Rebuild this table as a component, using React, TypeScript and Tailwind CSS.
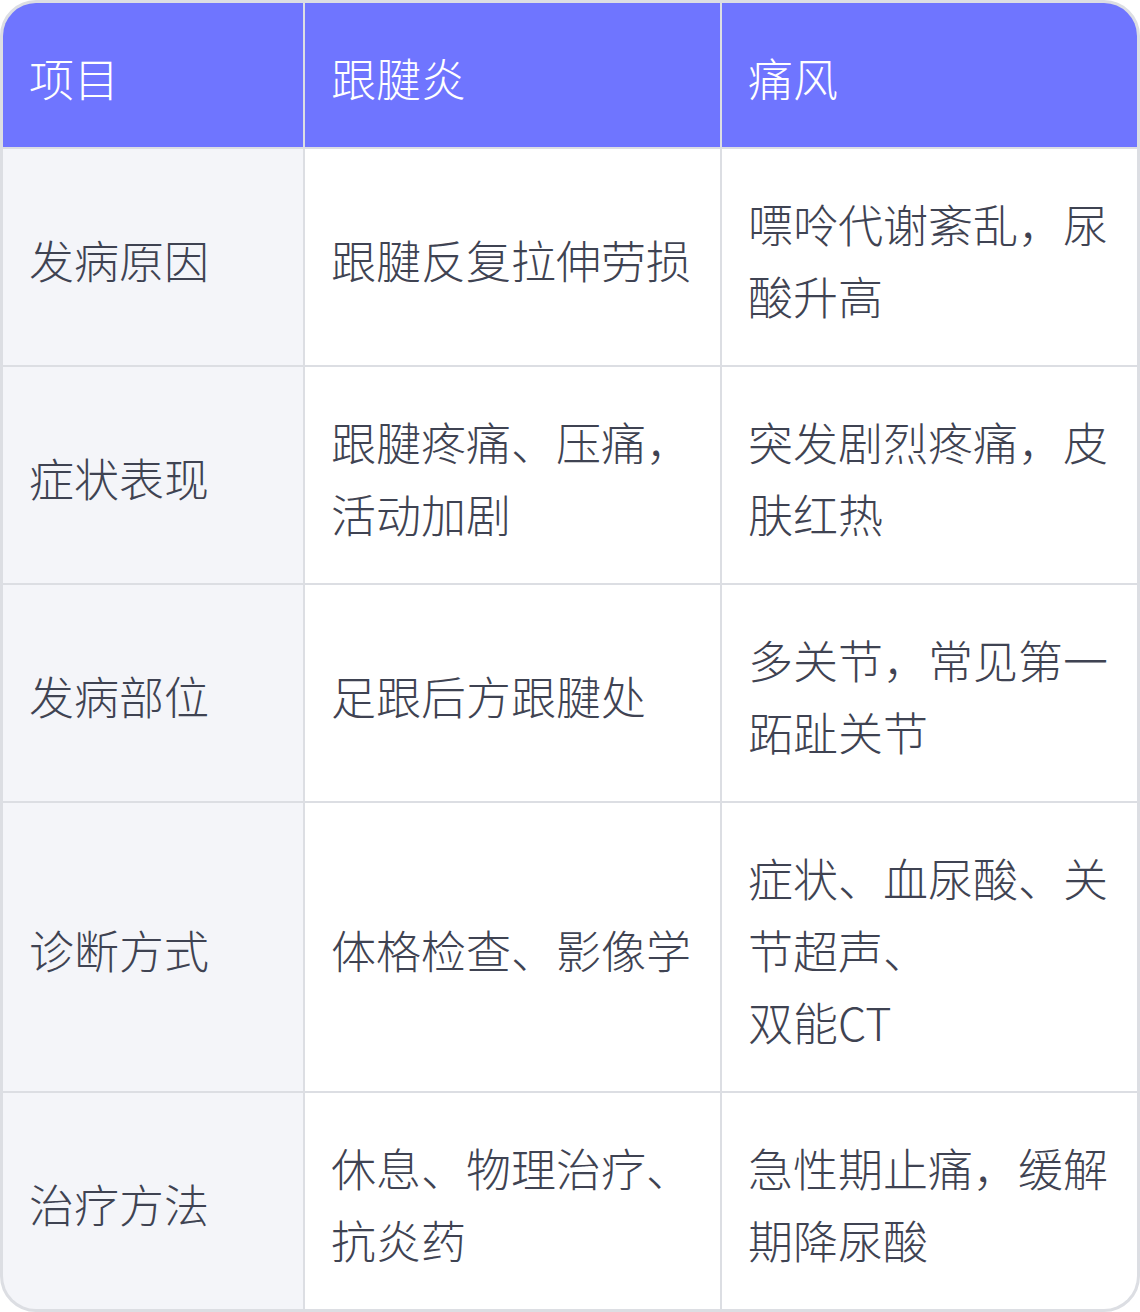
import React from 'react';

const headers = ['项目', '跟腱炎', '痛风'];

const rows: [string, React.ReactNode, React.ReactNode][] = [
  ['发病原因', '跟腱反复拉伸劳损', '嘌呤代谢紊乱，尿酸升高'],
  ['症状表现', '跟腱疼痛、压痛，活动加剧', '突发剧烈疼痛，皮肤红热'],
  ['发病部位', '足跟后方跟腱处', '多关节，常见第一跖趾关节'],
  [
    '诊断方式',
    '体格检查、影像学',
    <>
      症状、血尿酸、关节超声、
      <br />
      双能CT
    </>,
  ],
  ['治疗方法', '休息、物理治疗、抗炎药', '急性期止痛，缓解期降尿酸'],
];

const App = () => {
  return (
    <div className="w-[1140px] font-['Noto_Sans_CJK_SC',sans-serif] font-light">
      <div className="border-[3px] border-[#dcdee3] rounded-[36px] overflow-hidden bg-[#dcdee3]">
        <div className="grid grid-cols-[300px_415px_415px] gap-[2px]">
          {/* Header */}
          {headers.map(h => (
            <div
              key={h}
              className="bg-[#6f75ff] text-white text-[45px] leading-[72px] pl-[26px] pr-[28px] pt-[39px] pb-[33px] flex items-center"
            >
              {h}
            </div>
          ))}

          {/* Body */}
          {rows.map(([label, a, b]) => (
            <React.Fragment key={label}>
              <div className="bg-[#f4f5f9] text-[#3f4352] text-[45px] leading-[72px] pl-[26px] pr-[28px] pt-[39px] pb-[33px] flex items-center">
                {label}
              </div>
              <div className="bg-white text-[#3f4352] text-[45px] leading-[72px] pl-[26px] pr-[28px] pt-[39px] pb-[33px] flex items-center">
                <span>{a}</span>
              </div>
              <div className="bg-white text-[#3f4352] text-[45px] leading-[72px] pl-[26px] pr-[28px] pt-[39px] pb-[33px] flex items-center">
                <span>{b}</span>
              </div>
            </React.Fragment>
          ))}
        </div>
      </div>
    </div>
  );
};

export default App;
